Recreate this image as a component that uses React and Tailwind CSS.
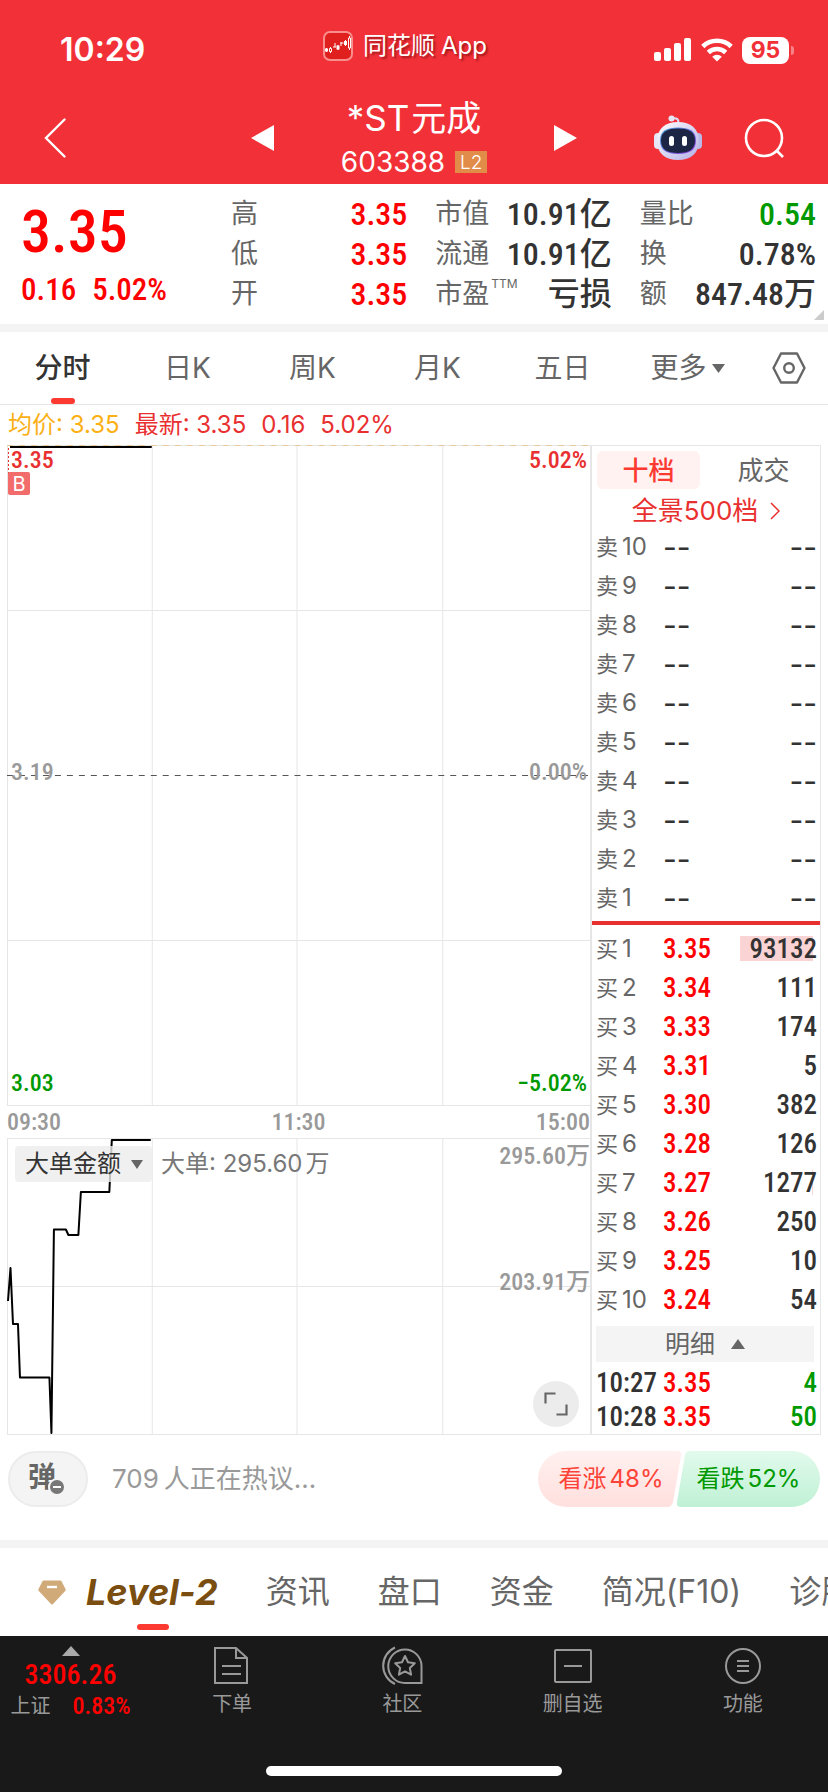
import React from "react";

const NUM = "font-['Roboto_Condensed','Liberation_Sans_Narrow','Noto_Sans_CJK_SC',sans-serif]";

const asks = [10, 9, 8, 7, 6, 5, 4, 3, 2, 1];

const bids = [
  { level: 1, price: "3.35", volume: "93132", bar: 73 },
  { level: 2, price: "3.34", volume: "111", bar: 0 },
  { level: 3, price: "3.33", volume: "174", bar: 0 },
  { level: 4, price: "3.31", volume: "5", bar: 0 },
  { level: 5, price: "3.30", volume: "382", bar: 0 },
  { level: 6, price: "3.28", volume: "126", bar: 0 },
  { level: 7, price: "3.27", volume: "1277", bar: 1 },
  { level: 8, price: "3.26", volume: "250", bar: 0 },
  { level: 9, price: "3.25", volume: "10", bar: 0 },
  { level: 10, price: "3.24", volume: "54", bar: 0 },
];

const trades = [
  { time: "10:27", price: "3.35", volume: "4" },
  { time: "10:28", price: "3.35", volume: "50" },
];

function StatusBar() {
  return (
    <div className="grid h-[92px] grid-cols-[1fr_auto_1fr] items-center text-white">
      <span className="pt-2 pl-[60px] text-[32px] leading-9 font-semibold">10:29</span>
      <span className="flex items-center justify-center gap-[10px] pr-[18px]">
        <svg width="30" height="30" viewBox="0 0 30 30" fill="none" aria-hidden="true">
          <rect x="1" y="1" width="28" height="28" rx="6" fill="#e0201f" stroke="#f88f8d" strokeWidth="2" />
          <path d="M3.500 17v4M7.500 16v6M12 12v4M15 14v5M18 11v4M22.500 9v6M26.500 5v14" stroke="#fff" strokeWidth="1" />
          <path d="M2 17.500h3v3H2zM13.500 14.500h3v4h-3zM21 10h3v4h-3z" fill="#fff" />
          <path d="M6.500 17.500h2v3h-2zM25.500 7h2v10h-2z" fill="#e0201f" stroke="#fff" />
          <path d="M10 16h3M17.500 12h3" stroke="#fff" />
        </svg>
        <span className="flex gap-[6px] text-[24px] leading-8 whitespace-nowrap [text-shadow:2px_2px_2px_rgba(90,0,0,0.5)]">
          <span>同花顺</span>
          <span>App</span>
        </span>
      </span>
      <span className="flex items-center justify-end gap-[9px] pt-2 pr-[34px]">
        <svg width="38" height="24" viewBox="0 0 38 24" fill="#fff" aria-hidden="true">
          <rect x="0" y="14" width="7" height="9" rx="2" />
          <rect x="10" y="10" width="7" height="13" rx="2" />
          <rect x="20" y="5" width="7" height="18" rx="2" />
          <rect x="30" y="0" width="7" height="23" rx="2" />
        </svg>
        <svg width="32" height="24" viewBox="0 0 32 24" fill="none" stroke="#fff" strokeWidth="4.600" aria-hidden="true">
          <path d="M1.800 8.500a20.500 20.500 0 0 1 28.400 0" />
          <path d="M7.300 14.500a12.500 12.500 0 0 1 17.400 0" />
          <path d="M16 23.500l-4.800-4.800a7 7 0 0 1 9.600 0z" fill="#fff" stroke="none" />
        </svg>
        <span className="flex items-center gap-[2px]">
          <span className="flex h-[27px] w-[47px] items-center justify-center rounded-lg bg-white text-[23px] leading-none font-bold text-[#f23038]">
            95
          </span>
          <span className="h-[9px] w-[3px] rounded-r-full bg-white/40" />
        </span>
      </span>
    </div>
  );
}

function Robot() {
  return (
    <svg width="48" height="46" viewBox="0 0 48 46" aria-hidden="true">
      <defs>
        <linearGradient id="shell" x1="0" y1="0" x2="1" y2="1">
          <stop offset="0" stopColor="#ffffff" />
          <stop offset="1" stopColor="#b3b0e6" />
        </linearGradient>
        <linearGradient id="visor" x1="0" y1="0" x2="1" y2="1">
          <stop offset="0" stopColor="#4ba6d8" />
          <stop offset="1" stopColor="#8a35d8" />
        </linearGradient>
      </defs>
      <path d="M18 3.500c5-1 7 1 6.500 5" fill="none" stroke="#dcdcf4" strokeWidth="2.200" />
      <circle cx="17.500" cy="3.500" r="3" fill="#e4e6f6" />
      <rect x="0" y="18" width="8" height="16" rx="4" fill="#e6e6f8" />
      <rect x="40" y="18" width="8" height="16" rx="4" fill="#b9b9e8" />
      <path d="M24 7C37 7 45 14 45 26S37 45 24 45 3 38 3 26 11 7 24 7z" fill="url(#shell)" />
      <path d="M24 12.500c11 0 18 3 18 13s-7 13.500-18 13.500-18-3.500-18-13.500 7-13 18-13z" fill="url(#visor)" />
      <path d="M24 13.500c10.500 0 17 3 17 12s-6.500 12.500-17 12.500S7 34.500 7 25.500s6.500-12 17-12z" fill="#1d2545" />
      <rect x="15" y="21" width="5" height="10" rx="2.500" fill="#fff" />
      <rect x="28" y="21" width="5" height="10" rx="2.500" fill="#fff" />
    </svg>
  );
}

function NavBar() {
  return (
    <div className="grid h-[92px] grid-cols-[1fr_auto_1fr] items-center text-white">
      <div className="pl-[44px]">
        <button type="button" aria-label="返回" className="block">
          <svg width="22" height="40" viewBox="0 0 22 40" fill="none" stroke="#fff" strokeWidth="2.400" strokeLinecap="round">
            <path d="M20.500 1.500L2 20l18.500 18.500" />
          </svg>
        </button>
      </div>
      <div className="flex w-[326px] items-center justify-between">
        <button type="button" aria-label="上一只">
          <svg width="23" height="26" viewBox="0 0 23 26" fill="#fff"><path d="M23 0v26L0 13z" /></svg>
        </button>
        <div className="flex flex-col items-center">
          <h1 className="flex gap-[2px] text-[35px] leading-[48px] whitespace-nowrap"><span>*ST</span><span>元成</span></h1>
          <p className="flex items-center gap-[10px] text-[28px] leading-10">
            603388
            <span className="flex h-[22px] w-[32px] items-center justify-center bg-[#e28c4a] text-[19px] leading-none font-light">L2</span>
          </p>
        </div>
        <button type="button" aria-label="下一只">
          <svg width="23" height="26" viewBox="0 0 23 26" fill="#fff"><path d="M0 0v26l23-13z" /></svg>
        </button>
      </div>
      <div className="flex items-center justify-end gap-[42px] pr-[43px]">
        <button type="button" aria-label="智能助手"><Robot /></button>
        <button type="button" aria-label="搜索">
          <svg width="41" height="41" viewBox="0 0 41 41" fill="none" stroke="#fff" strokeWidth="2.600">
            <circle cx="20" cy="20" r="18" />
            <path d="M32 32l7 7" />
          </svg>
        </button>
      </div>
    </div>
  );
}

function Stat({ label, value, sup, tone = "text-[#333]" }) {
  return (
    <div className="flex h-10 items-center justify-between">
      <dt className="flex text-[27px] leading-10 text-[#666]">
        {label}
        {sup && <sup className="top-0 pt-[2px] pl-[2px] text-[12px] leading-4">{sup}</sup>}
      </dt>
      <dd className={`${NUM} text-[32px] leading-10 font-medium ${tone}`}>{value}</dd>
    </div>
  );
}

function Quote() {
  return (
    <section className="relative flex h-[140px] bg-white pr-3">
      <div className={`${NUM} w-[231px] shrink-0 pl-[21px] font-medium text-[#f00]`}>
        <p className="pt-[16px] text-[60px] leading-[64px]">3.35</p>
        <p className="flex gap-4 pt-[6px] text-[31px] leading-10"><span>0.16</span><span>5.02%</span></p>
      </div>
      <dl className="grid flex-1 auto-rows-min grid-cols-3 gap-x-7 pt-[10px]">
        <Stat label="高" value="3.35" tone="text-[#f00]" />
        <Stat label="市值" value="10.91亿" />
        <Stat label="量比" value="0.54" tone="text-[#090]" />
        <Stat label="低" value="3.35" tone="text-[#f00]" />
        <Stat label="流通" value="10.91亿" />
        <Stat label="换" value="0.78%" />
        <Stat label="开" value="3.35" tone="text-[#f00]" />
        <Stat label="市盈" sup="TTM" value="亏损" />
        <Stat label="额" value="847.48万" />
      </dl>
      <svg className="absolute right-1 bottom-1" width="10" height="10" viewBox="0 0 10 10" aria-hidden="true">
        <path d="M10 0v10H0z" fill="#ccc" />
      </svg>
    </section>
  );
}

function PeriodTabs() {
  const tab = "flex h-full flex-1 items-center justify-center text-[28px] text-[#666]";
  return (
    <nav className="flex h-[73px] items-center border-b border-[#e6e6e6]">
      <button type="button" className="relative flex h-full flex-1 items-center justify-center text-[28px] font-medium text-[#333]">
        分时
        <span className="absolute bottom-0 h-[6px] w-6 rounded-full bg-[#fd3a31]" />
      </button>
      <button type="button" className={tab}>日K</button>
      <button type="button" className={tab}>周K</button>
      <button type="button" className={tab}>月K</button>
      <button type="button" className={tab}>五日</button>
      <button type="button" className={tab}>
        更多
        <svg className="ml-[5px]" width="13" height="9" viewBox="0 0 13 9" fill="#666"><path d="M0 0h13L6.500 9z" /></svg>
      </button>
      <button type="button" aria-label="设置" className="flex w-[78px] justify-center">
        <svg width="34" height="32" viewBox="0 0 34 32" fill="none" stroke="#666" strokeWidth="2.400" strokeLinejoin="round">
          <path d="M9 1.500h16L32.500 16 25 30.500H9L1.500 16z" />
          <circle cx="17" cy="16" r="4.800" />
        </svg>
      </button>
    </nav>
  );
}

function PriceChart() {
  const label = `${NUM} absolute text-[24px] leading-6 font-medium`;
  return (
    <div className="relative">
      <svg className="block h-[661px] w-full" viewBox="0 0 584 661" preserveAspectRatio="none" fill="none">
        <g stroke="#e6e6e6" shapeRendering="crispEdges">
          <path d="M.5 0v661M145.500 0v661M290.500 0v661M436.500 0v661M0 .5h584M0 165.500h584M0 495.500h584M0 660.500h584" />
        </g>
        <path d="M0 330.500h584" stroke="#555" strokeDasharray="6 6" />
        <path d="M0 .5h584" stroke="#e9c99b" strokeDasharray="6 6" />
        <path d="M1.500 3v26" stroke="#e93030" strokeDasharray="2 2" />
        <path d="M3 2h142" stroke="#000" strokeWidth="2" />
      </svg>
      <span className={`${label} top-[3px] left-[4px] text-[#e93030]`}>3.35</span>
      <span className={`${label} top-[3px] right-[3px] text-[#e93030]`}>5.02%</span>
      <span className="absolute top-[27px] left-px flex h-[23px] w-[22px] items-center justify-center rounded-[2px] bg-[#f26c6c] text-[20px] leading-none text-white">B</span>
      <span className={`${label} top-[315px] left-[4px] text-[#999]`}>3.19</span>
      <span className={`${label} top-[315px] right-[3px] text-[#999]`}>0.00%</span>
      <span className={`${label} bottom-[11px] left-[4px] text-[#090]`}>3.03</span>
      <span className={`${label} right-[3px] bottom-[11px] text-[#090]`}>−5.02%</span>
    </div>
  );
}

function OrderChart() {
  const label = `${NUM} absolute right-0 text-[24px] leading-6 font-medium text-[#999]`;
  return (
    <div className="relative">
      <svg className="block h-[297px] w-full" viewBox="0 0 584 297" preserveAspectRatio="none" fill="none">
        <g stroke="#e6e6e6" shapeRendering="crispEdges">
          <path d="M.5 0v297M145.500 0v297M290.500 0v297M436.500 0v297M0 .5h584M0 148.500h584M0 296.500h584" />
        </g>
        <path
          d="M1 163L3.500 130 6 186h5l2 53.500h29.500L44.500 295 47 91.500h12l2.500 5.500h10L74 54h28.500l2.500-52h39"
          stroke="#000"
          strokeWidth="2"
          strokeLinejoin="round"
        />
      </svg>
      <div className="absolute top-[8px] left-[8px] flex items-center gap-[9px]">
        <div className="relative h-9 w-[137px] rounded bg-[#ececec]/80">
          <select aria-label="指标" className="h-full w-full appearance-none bg-transparent pl-[10px] text-[24px] leading-9 text-[#333] outline-none">
            <option>大单金额</option>
          </select>
          <svg className="pointer-events-none absolute top-[14px] right-[9px]" width="12" height="9" viewBox="0 0 12 9" fill="#666"><path d="M0 0h12L6 9z" /></svg>
        </div>
        <span className="flex gap-[3px] text-[24px] leading-9 whitespace-nowrap text-[#777]"><span>大单: 295.60</span><span>万</span></span>
      </div>
      <span className={`${label} top-[6px]`}>295.60万</span>
      <span className={`${label} top-[132px]`}>203.91万</span>
      <button type="button" aria-label="全屏" className="absolute right-[11px] bottom-[8px] flex size-[46px] items-center justify-center rounded-full bg-[#ececec]">
        <svg width="24" height="24" viewBox="0 0 24 24" fill="none" stroke="#666" strokeWidth="2.200">
          <path d="M1.500 11.500v-10h10M22.500 12.500v10h-10" />
        </svg>
      </button>
    </div>
  );
}

function BookRow({ side, level, children }) {
  return (
    <tr className="h-[39px]">
      <th scope="row" className="w-[68px] p-0 pl-1 text-left font-normal text-[#666]">
        <span className="flex items-center gap-[4px] text-[22px] leading-[38px]">
          <span>{side}</span>
          <span className="text-[24px]">{level}</span>
        </span>
      </th>
      {children}
    </tr>
  );
}

function OrderBook() {
  return (
    <aside className="w-[231px] shrink-0 border border-l-2 border-[#e6e6e6] pt-[5px]">
      <div className="flex h-[38px] px-[5px] text-[26px]">
        <button type="button" className="w-[103px] rounded-md bg-[#fff2f1] leading-10 font-medium text-[#fd3a31]">十档</button>
        <button type="button" className="flex-1 pl-3 leading-10 text-[#666]">成交</button>
      </div>
      <button type="button" className="flex h-[38px] w-full items-center justify-center gap-3 pt-[6px] text-[26px] leading-8 text-[#e93030]">
        全景500档
        <svg width="10" height="18" viewBox="0 0 10 18" fill="none" stroke="#e93030" strokeWidth="1.500"><path d="M1 1l8 8-8 8" /></svg>
      </button>
      <table className="w-full table-fixed border-collapse">
        <tbody>
          {asks.map((level) => (
            <BookRow key={level} side="卖" level={level}>
              <td className="w-[70px] p-0 pl-[3px] text-[30px] leading-[38px] text-[#333]">--</td>
              <td className="p-0 pr-[3px] text-right text-[30px] leading-[38px] text-[#333]">--</td>
            </BookRow>
          ))}
        </tbody>
      </table>
      <div className="my-1 h-1 bg-[#e93030]" />
      <table className="w-full table-fixed border-collapse">
        <tbody>
          {bids.map((b) => (
            <BookRow key={b.level} side="买" level={b.level}>
              <td className={`${NUM} w-[70px] p-0 pl-[3px] text-[27px] leading-[38px] font-medium text-[#f00]`}>{b.price}</td>
              <td className={`${NUM} relative p-0 pr-[3px] text-right text-[27px] leading-[38px] font-medium text-[#333]`}>
                {b.bar > 0 && <span className="absolute top-[7px] right-[7px] h-[25px] bg-[#fad3d4]" style={{ width: b.bar }} />}
                <span className="relative">{b.volume}</span>
              </td>
            </BookRow>
          ))}
        </tbody>
      </table>
      <button type="button" className="mx-1 mt-[7px] flex h-9 w-[218px] items-center justify-center gap-4 bg-[#f4f4f4] text-[25px] leading-9 text-[#666]">
        明细
        <svg width="14" height="10" viewBox="0 0 14 10" fill="#666"><path d="M0 10h14L7 0z" /></svg>
      </button>
      <table className={`${NUM} mt-1 w-full table-fixed border-collapse text-[27px] font-medium`}>
        <tbody>
          {trades.map((t) => (
            <tr key={t.time} className="h-[34px] leading-[34px]">
              <td className="w-[68px] p-0 pl-1 text-[#333]">{t.time}</td>
              <td className="w-[70px] p-0 pl-[3px] text-[#f00]">{t.price}</td>
              <td className="p-0 pr-[3px] text-right text-[#090]">{t.volume}</td>
            </tr>
          ))}
        </tbody>
      </table>
    </aside>
  );
}

function Discussion() {
  return (
    <section className="flex h-[105px] items-start pt-4 pr-2 pl-2">
      <button type="button" aria-label="弹幕" className="relative flex h-14 w-20 items-center justify-center rounded-full border-2 border-[#ececec] bg-[#f4f4f4] pr-3 pb-1 text-[28px] leading-none font-bold text-[#666]">
        弹
        <svg className="absolute right-[20px] bottom-[9px]" width="18" height="18" viewBox="0 0 18 18">
          <circle cx="9" cy="9" r="8" fill="#777" stroke="#f4f4f4" strokeWidth="2" />
          <path d="M5 9h8" stroke="#fff" strokeWidth="2" />
        </svg>
      </button>
      <p className="flex flex-1 gap-[5px] pl-6 text-[26px] leading-14 text-[#999]"><span>709</span><span>人正在热议...</span></p>
      <button type="button" className="relative h-14 w-[144px] text-[24px] leading-14 text-[#fd4338]">
        <svg className="absolute inset-0" width="144" height="56" viewBox="0 0 144 56" aria-hidden="true">
          <defs><linearGradient id="up" x1="0" y1="0" x2="0" y2="1"><stop offset="0" stopColor="#fff0ef" /><stop offset="1" stopColor="#ffe0de" /></linearGradient></defs>
          <path d="M28 0h111q5 0 4 5l-8 46q-1 5-6 5H28a28 28 0 0 1 0-56z" fill="url(#up)" />
        </svg>
        <span className="relative flex justify-center gap-[3px] pl-[2px]"><span>看涨</span><span>48%</span></span>
      </button>
      <button type="button" className="relative -ml-[5px] h-14 w-[143px] text-[24px] leading-14 text-[#090]">
        <svg className="absolute inset-0" width="143" height="56" viewBox="0 0 143 56" aria-hidden="true">
          <defs><linearGradient id="down" x1="0" y1="0" x2="0" y2="1"><stop offset="0" stopColor="#e2faec" /><stop offset="1" stopColor="#bff1d5" /></linearGradient></defs>
          <path d="M13 0h102a28 28 0 0 1 0 56H4q-5 0-4-5L8 4q1-4 5-4z" fill="url(#down)" />
        </svg>
        <span className="relative flex justify-center gap-[3px]"><span>看跌</span><span>52%</span></span>
      </button>
    </section>
  );
}

function SectionTabs() {
  const tab = "h-full shrink-0 text-[32px] leading-[88px] whitespace-nowrap text-[#666]";
  return (
    <nav className="flex h-[88px] items-center gap-12 overflow-hidden bg-white pl-[38px]">
      <button type="button" className="relative flex h-full shrink-0 items-center gap-5">
        <svg width="28" height="26" viewBox="0 0 28 26" aria-hidden="true">
          <path d="M6 1.500h16q1 0 1.500.8l4 7.700q.5 1-.3 2L15 25q-1 1-2 0L.8 12q-.8-1-.3-2l4-7.700Q5 1.500 6 1.500z" fill="#d0aa78" />
          <path d="M9 8h10" stroke="#fff" strokeWidth="2.400" />
        </svg>
        <span className="text-[36px] leading-[88px] font-bold text-[#7a4d10] italic">Level-2</span>
        <span className="absolute bottom-[6px] left-[99px] h-[6px] w-8 rounded-full bg-[#fd3a31]" />
      </button>
      <button type="button" className={tab}>资讯</button>
      <button type="button" className={tab}>盘口</button>
      <button type="button" className={tab}>资金</button>
      <button type="button" className={tab}>简况(F10)</button>
      <button type="button" className={tab}>诊股</button>
    </nav>
  );
}

function ToolItem({ text, children }) {
  return (
    <button type="button" className="flex flex-1 flex-col items-center pt-[10px] text-[20px] leading-8 text-[#999]">
      <svg width="42" height="40" viewBox="0 0 42 40" fill="none" stroke="#999" strokeWidth="2" className="mb-[2px]" aria-hidden="true">{children}</svg>
      {text}
    </button>
  );
}

function ToolBar() {
  return (
    <footer className="flex h-[156px] flex-col justify-between bg-[#191919] pb-4">
      <div className="flex">
        <button type="button" className="flex w-[147px] flex-col items-center pt-[10px] pr-[6px]">
          <svg width="18" height="10" viewBox="0 0 18 10" fill="#aaa" aria-hidden="true"><path d="M0 10h18L9 0z" /></svg>
          <span className={`${NUM} mt-[3px] text-[28px] leading-8 font-medium text-[#f00]`}>3306.26</span>
          <span className="mt-[1px] flex items-center gap-[22px] leading-7">
            <span className="text-[20px] text-[#999]">上证</span>
            <span className={`${NUM} text-[24px] font-medium text-[#f00]`}>0.83%</span>
          </span>
        </button>
        <ToolItem text="下单">
          <path d="M5 2h21l11 10v25H5zM26 2v10h11M12 20h19M12 28h19" transform="translate(-1 0)" />
        </ToolItem>
        <ToolItem text="社区">
          <path d="M24 3.500a16.500 16.500 0 0 1 16.500 16.500v17H24A16.700 16.700 0 0 1 24 3.500z" />
          <path d="M14 1.500a20 20 0 0 0 0 36.500" />
          <path d="M24 10l3 6.300 6.800.9-5 4.700 1.300 6.800-6.100-3.300-6.100 3.300 1.300-6.800-5-4.700 6.800-.9z" strokeLinejoin="round" />
        </ToolItem>
        <ToolItem text="删自选">
          <rect x="3" y="4" width="36" height="32" rx="1" />
          <path d="M12 20h18" />
        </ToolItem>
        <ToolItem text="功能">
          <circle cx="21" cy="20" r="17" />
          <path d="M15 15h12M15 20h12M15 25h12" />
        </ToolItem>
      </div>
      <div className="mx-auto h-[10px] w-[296px] rounded-full bg-white" />
    </footer>
  );
}

export default function App() {
  return (
    <main className="min-h-screen bg-white font-['Inter','Noto_Sans_CJK_SC',sans-serif]">
      <header className="bg-[#f23038]">
        <StatusBar />
        <NavBar />
      </header>
      <Quote />
      <div className="h-2 bg-[#f4f4f4]" />
      <PeriodTabs />
      <p className="flex h-10 items-center gap-[15px] px-2 text-[24px] leading-10 text-[#e93030]">
        <span className="text-[#fbb015]">均价: 3.35</span>
        <span>最新: 3.35</span>
        <span>0.16</span>
        <span>5.02%</span>
      </p>
      <div className="flex px-[7px]">
        <div className="min-w-0 flex-1">
          <PriceChart />
          <div className={`${NUM} grid h-8 grid-cols-3 items-center text-[24px] leading-8 font-medium text-[#999]`}>
            <span>09:30</span>
            <span className="text-center">11:30</span>
            <span className="text-right">15:00</span>
          </div>
          <OrderChart />
        </div>
        <OrderBook />
      </div>
      <Discussion />
      <div className="h-2 bg-[#f4f4f4]" />
      <SectionTabs />
      <ToolBar />
    </main>
  );
}
